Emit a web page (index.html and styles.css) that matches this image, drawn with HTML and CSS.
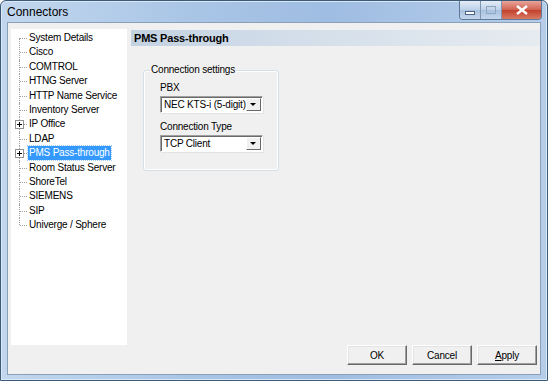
FILE: index.html
```html
<!DOCTYPE html>
<html lang="en">
<head>
    <meta charset="UTF-8">
    <title>Connectors</title>
    <link rel="stylesheet" href="styles.css">
</head>
<body>
    <div class="window">
        <div class="titlebar">
            <span class="title">Connectors</span>
            <div class="caption-buttons">
                <div class="cap-btn cap-min"><span class="min-glyph"></span></div>
                <div class="cap-btn cap-max"><span class="max-glyph"></span></div>
                <div class="cap-btn cap-close">
                    <svg width="12" height="10" viewBox="0 0 12 10">
                        <path d="M1 1 L11 9 M11 1 L1 9" stroke="#fff" stroke-width="2.4"/>
                    </svg>
                </div>
            </div>
        </div>

        <div class="client">
            <div class="main">
                <ul class="tree">
                    <li><span class="label">System Details</span></li>
                    <li><span class="label">Cisco</span></li>
                    <li><span class="label">COMTROL</span></li>
                    <li><span class="label">HTNG Server</span></li>
                    <li><span class="label">HTTP Name Service</span></li>
                    <li><span class="label">Inventory Server</span></li>
                    <li class="has-kids"><span class="plus"></span><span class="label">IP Office</span></li>
                    <li><span class="label">LDAP</span></li>
                    <li class="has-kids"><span class="plus"></span><span class="label selected">PMS Pass-through</span></li>
                    <li><span class="label">Room Status Server</span></li>
                    <li><span class="label">ShoreTel</span></li>
                    <li><span class="label">SIEMENS</span></li>
                    <li><span class="label">SIP</span></li>
                    <li class="last"><span class="label">Univerge / Sphere</span></li>
                </ul>

                <div class="panel">
                    <div class="panel-header">PMS Pass-through</div>
                    <fieldset class="group">
                        <legend>Connection settings</legend>
                        <label class="field-label">PBX</label>
                        <div class="combo">
                            <span class="combo-text">NEC KTS-i (5-digit)</span>
                            <span class="combo-arrow"></span>
                        </div>
                        <label class="field-label second">Connection Type</label>
                        <div class="combo">
                            <span class="combo-text">TCP Client</span>
                            <span class="combo-arrow"></span>
                        </div>
                    </fieldset>
                </div>
            </div>

            <div class="footer">
                <button class="btn">OK</button>
                <button class="btn">Cancel</button>
                <button class="btn"><u>A</u>pply</button>
            </div>
        </div>
    </div>
</body>
</html>
```

FILE: styles.css
```css
* {
    margin: 0;
    padding: 0;
    box-sizing: border-box;
    font-family: 'Liberation Sans', Arial, sans-serif;
}
body {
    width: 548px;
    height: 381px;
    overflow: hidden;
    background: #fff;
}
.window {
    width: 548px;
    height: 381px;
    display: flex;
    flex-direction: column;
    border: 1px solid #3c5a78;
    border-radius: 6px 6px 0 0;
    background: linear-gradient(90deg, #c2d7ee 0%, #a9c5e6 35%, #9fbde2 60%, #b6cdea 100%);
    box-shadow: inset 0 0 0 1px #dbe8f6;
}
.titlebar {
    height: 21px;
    display: flex;
    justify-content: space-between;
    align-items: flex-start;
    padding-left: 6px;
}
.title {
    font-size: 12px;
    color: #000;
    line-height: 22px;
}
.caption-buttons {
    display: flex;
    margin-right: 5px;
    border: 1px solid #5f7a98;
    border-top: none;
    border-radius: 0 0 4px 4px;
    overflow: hidden;
}
.cap-btn {
    height: 18px;
    display: flex;
    align-items: center;
    justify-content: center;
}
.cap-min, .cap-max {
    width: 21px;
    background: linear-gradient(#e4edf7, #bcd0e8 50%, #a9c1df 51%, #c3d6ec);
    border-right: 1px solid #7d96b2;
}
.cap-close {
    width: 39px;
    background: linear-gradient(#e8a59a, #d0604f 50%, #c2402c 51%, #d87a63);
}
.min-glyph {
    width: 10px;
    height: 4px;
    margin-top: 5px;
    background: #fff;
    border: 1px solid #4d6480;
}
.max-glyph {
    width: 10px;
    height: 8px;
    border: 1px solid #8fa6c0;
    box-shadow: inset 0 2px 0 #c8d6e6;
}
.client {
    flex: 1;
    margin: 0 6px 6px 6px;
    background: #f0f0f0;
    border: 1px solid #8aa0b8;
    display: flex;
    flex-direction: column;
}
.main {
    flex: 1;
    display: flex;
    padding: 6px 0 0 3px;
    gap: 4px;
}
.tree {
    list-style: none;
    width: 116px;
    height: 316px;
    background: #fff;
    padding: 2px 0 0 2px;
}
.tree li {
    position: relative;
    height: 14.4px;
    padding-left: 15px;
    font-size: 10px;
    letter-spacing: -0.2px;
    line-height: 14px;
    white-space: nowrap;
    color: #000;
}
.tree li::before {
    content: "";
    position: absolute;
    left: 6px;
    top: 0;
    height: 100%;
    border-left: 1px dotted #a0a0a0;
}
.tree li:first-child::before {
    top: 7px;
    height: 8px;
}
.tree li.last::before {
    height: 7px;
}
.tree li::after {
    content: "";
    position: absolute;
    left: 7px;
    top: 7px;
    width: 7px;
    border-top: 1px dotted #a0a0a0;
}
.plus {
    position: absolute;
    left: 2px;
    top: 3px;
    width: 9px;
    height: 9px;
    border: 1px solid #919191;
    background: #fff;
    z-index: 1;
}
.plus::before {
    content: "";
    position: absolute;
    left: 1px;
    top: 3px;
    width: 5px;
    border-top: 1px solid #000;
}
.plus::after {
    content: "";
    position: absolute;
    left: 3px;
    top: 1px;
    height: 5px;
    border-left: 1px solid #000;
}
.label {
    display: inline-block;
    padding: 0 1px;
}
.selected {
    background: #3399ff;
    color: #fff;
    outline: 1px dotted #a6cdf5;
}
.panel {
    flex: 1;
    display: flex;
    flex-direction: column;
    align-items: flex-start;
}
.panel-header {
    align-self: stretch;
    height: 16px;
    margin-top: 1px;
    padding-left: 3px;
    font-size: 11px;
    letter-spacing: -0.2px;
    font-weight: bold;
    line-height: 16px;
    color: #000;
    background: linear-gradient(90deg, #c3d2e1 0%, #d3deea 40%, #e6ebf0 100%);
}
.group {
    margin: 18px 0 0 12px;
    width: 136px;
    height: 107px;
    border: 1px solid #d5dfe5;
    border-radius: 3px;
    box-shadow: 0 0 0 1px #fff inset;
    padding: 0 0 0 16px;
    display: flex;
    flex-direction: column;
    align-items: flex-start;
}
.group legend {
    font-size: 10px;
    letter-spacing: -0.2px;
    line-height: 12px;
    color: #000;
    padding: 0 1px;
    margin-left: -10px;
}
.field-label {
    font-size: 10px;
    letter-spacing: -0.2px;
    line-height: 13px;
    margin-top: 5px;
    color: #000;
}
.field-label.second {
    margin-top: 7px;
}
.combo {
    width: 103px;
    height: 17px;
    margin-top: 2px;
    background: #fff;
    border: 1px solid;
    border-color: #a0a0a0 #fff #fff #a0a0a0;
    box-shadow: inset 1px 1px 0 #696969, 1px 1px 0 #e3e3e3;
    display: flex;
    align-items: center;
    justify-content: space-between;
    padding: 0 1px 0 3px;
}
.combo-text {
    font-size: 10px;
    letter-spacing: -0.2px;
    white-space: nowrap;
    color: #000;
}
.combo-arrow {
    position: relative;
    flex-shrink: 0;
    width: 15px;
    height: 13px;
    background: #f0f0f0;
    border: 1px solid;
    border-color: #fff #696969 #696969 #fff;
}
.combo-arrow::after {
    content: "";
    position: absolute;
    left: 3px;
    top: 4px;
    border-left: 3px solid transparent;
    border-right: 3px solid transparent;
    border-top: 3px solid #000;
}
.footer {
    height: 29px;
    display: flex;
    justify-content: flex-end;
    align-items: flex-start;
    gap: 5px;
    padding-right: 3px;
}
.btn {
    width: 60px;
    height: 20px;
    font-size: 10px;
    letter-spacing: -0.2px;
    color: #000;
    background: #f0f0f0;
    border: 1px solid;
    border-color: #fff #696969 #696969 #fff;
    box-shadow: inset -1px -1px 0 #a0a0a0, inset 1px 1px 0 #e3e3e3;
}
.btn u {
    font-family: inherit;
}
```
